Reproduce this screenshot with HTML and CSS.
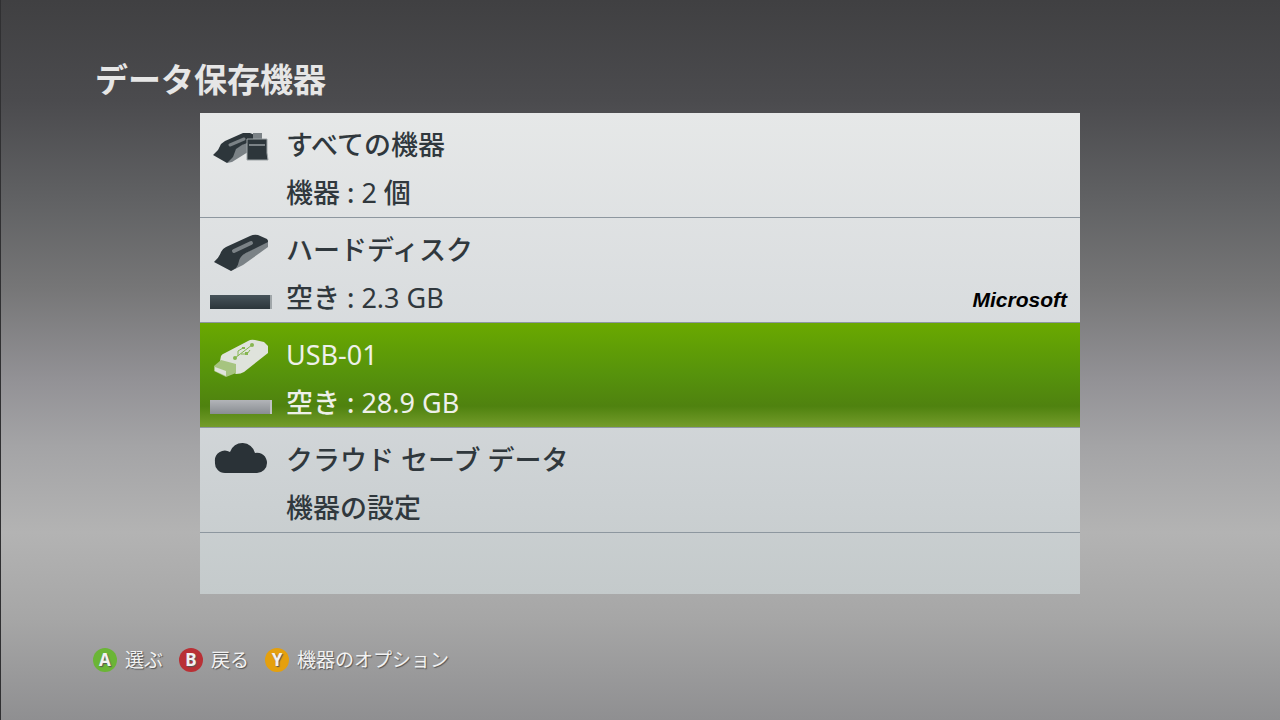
FILE: index.html
```html
<!DOCTYPE html>
<html lang="ja">
<head>
  <meta charset="UTF-8" />
  <meta name="viewport" content="width=device-width, initial-scale=1" />
  <title>データ保存機器</title>
  <link rel="stylesheet" href="styles.css">
</head>
<body>

  <h1 class="page-title">データ保存機器</h1>

  <main class="device-panel">
    <ul class="device-list">

      <li>
        <button class="device" type="button">
          <span class="device-side">
            <svg class="device-icon" viewBox="0 0 62 44" aria-hidden="true">
              <path fill="#7b8286" d="M17 35 L26 20 L46 9 V22 L38 24 L22 34z"/>
              <path fill="#2d363b" d="M3 27 L8 22 L11 16 L15 13 L33 5 H40 L47 8 V11 L32 17 L26 21 L23 29 L17 35z"/>
              <path stroke="#7b8286" stroke-width="3" stroke-linecap="round" d="M20 17 L34 11"/>
              <path fill="#7b8286" d="M43 5h9v7h-9z"/>
              <path fill="#2d363b" stroke="#9da3a6" d="M37 11h20v14l1 7H37v-7z"/>
              <path stroke="#7b8286" stroke-width="2" d="M39 17h16"/>
            </svg>
          </span>
          <span class="device-text">
            <span class="line">すべての機器</span>
            <span class="line">機器 : <span class="latin">2</span> 個</span>
          </span>
        </button>
      </li>

      <li>
        <button class="device" type="button">
          <span class="device-side">
            <svg class="device-icon" viewBox="0 0 62 44" aria-hidden="true">
              <path fill="#7b8286" d="M21 38 L29 24 L58 7 V14 L33 32z"/>
              <path fill="#2d363b" d="M4 29 Q9 25 11 19 Q12 16 16 14 L40 3 Q44 1 48 2 L57 6 Q58 7 58 9 L36 20 Q30 23 29 28 Q28 33 26 35 L21 38z"/>
              <path stroke="#7b8286" stroke-width="4" stroke-linecap="round" d="M24 18 L41 10"/>
            </svg>
            <span class="capacity"></span>
          </span>
          <span class="device-text">
            <span class="line">ハードディスク</span>
            <span class="line">空き : <span class="latin">2.3 GB</span></span>
          </span>
          <span class="brand">Microsoft</span>
        </button>
      </li>

      <li>
        <button class="device selected" type="button">
          <span class="device-side">
            <svg class="device-icon" viewBox="0 0 62 44" aria-hidden="true">
              <path fill="#dfe3dc" d="M10 23 L11 18 Q12 16 15 15 L38 3 Q41 1 45 2 L54 4 L58 8 V15 L34 34 Q31 36 26 36z"/>
              <path fill="#a6c480" d="M4 28 L11 22 L26 26 V35 L16 39 L4 33z"/>
              <path fill="#dfe3dc" d="M5 29 L16 33 V38 L5 33z"/>
              <path fill="none" stroke="#86b550" d="M25 20 L42 7 M28 18 L28 13 L33 10 M31 16 L37 16 L40 12"/>
              <circle cx="25" cy="20" r="2" fill="#86b550"/>
              <circle cx="42" cy="7" r="2" fill="#86b550"/>
              <path fill="#86b550" d="M32 9h3v2h-3z M35 14h3v3h-3z"/>
            </svg>
            <span class="capacity capacity-light"></span>
          </span>
          <span class="device-text">
            <span class="line latin">USB-01</span>
            <span class="line">空き : <span class="latin">28.9 GB</span></span>
          </span>
        </button>
      </li>

      <li>
        <button class="device" type="button">
          <span class="device-side">
            <svg class="device-icon" viewBox="0 0 62 44" aria-hidden="true">
              <path fill="#2a3237" d="M15 30 A10 10 0 0 1 5 19 A10 10 0 0 1 20 9 A13 13 0 0 1 45 10 A10 10 0 0 1 57 20 A10 10 0 0 1 47 30z"/>
            </svg>
          </span>
          <span class="device-text">
            <span class="line">クラウド セーブ データ</span>
            <span class="line">機器の設定</span>
          </span>
        </button>
      </li>

    </ul>
  </main>

  <footer class="hints">
    <button class="hint" type="button"><span class="pad pad-a">A</span>選ぶ</button>
    <button class="hint" type="button"><span class="pad pad-b">B</span>戻る</button>
    <button class="hint" type="button"><span class="pad pad-y">Y</span>機器のオプション</button>
  </footer>

</body>
</html>
```
FILE: styles.css
```css
* {
  box-sizing: border-box;
}

body {
  margin: 0;
  min-height: 100vh;
  padding: 56px 0 44px;
  display: flex;
  flex-direction: column;
  box-shadow: inset 1px 0 #303032;
  font-family: "Noto Sans", "Noto Sans CJK JP", sans-serif;
  background: linear-gradient(#404042 0%, #4b4b4e 14%, #616264 28%, #767677 40%, #939296 53%, #a4a4a6 62%, #b3b3b3 74%, #a6a6a6 86%, #8f8f91 100%);
}

button {
  margin: 0;
  border: 0;
  padding: 0;
  background: none;
  color: inherit;
  font: inherit;
  text-align: left;
  cursor: pointer;
}

.page-title {
  margin: 0 0 9px 95px;
  font-size: 33px;
  line-height: 48px;
  font-weight: 700;
  color: #e6e6e6;
}

/* Device list */
.device-panel {
  width: 100%;
  max-width: 880px;
  margin: 0 auto;
  padding-bottom: 61px;
  background: linear-gradient(#e6e8e8, #d3d7da 60%, #c4cacb);
}

.device-list {
  margin: 0;
  padding: 0;
  list-style: none;
}

.device {
  width: 100%;
  padding: 8px 10px 0;
  display: flex;
  border-bottom: 1px solid #8d979f;
  color: #30383d;
  font-size: 27px;
  line-height: 48px;
  font-weight: 500;
}

.device.selected {
  color: #eef0ea;
  background: linear-gradient(#6aa900, #56920c 50%, #4f820f 80%, #749c2b);
}

.device-side {
  width: 62px;
  margin-right: 14px;
  padding-top: 7px;
  flex: none;
}

.device-icon {
  display: block;
  width: 62px;
  height: 44px;
}

.device-text {
  flex: 1;
}

.line {
  display: block;
  height: 48px;
}

.latin {
  font-weight: 400;
}

.capacity {
  display: block;
  height: 14px;
  margin-top: 18px;
  border-right: 2px solid #a0a6a9;
  background: linear-gradient(#47535a, #2b353a);
}

.capacity-light {
  border-right-color: #c0c2c4;
  background: linear-gradient(#b2b4b8, #898d92);
}

.brand {
  align-self: flex-end;
  padding-right: 3px;
  font-family: "Liberation Sans", Arial, sans-serif;
  font-size: 21px;
  line-height: 44px;
  font-weight: 700;
  font-style: italic;
  color: #000;
}

/* Button hints */
.hints {
  margin-top: auto;
  padding-left: 93px;
  display: flex;
  gap: 16px;
}

.hint {
  display: flex;
  align-items: center;
  gap: 8px;
  font-size: 19px;
  line-height: 32px;
  color: #f2f2f2;
  text-shadow: 1px 1px 1px #555;
}

.pad {
  width: 24px;
  height: 24px;
  border-radius: 50%;
  font-size: 17px;
  line-height: 24px;
  font-weight: 700;
  text-align: center;
}

.pad-a {
  background: #6bb536;
}

.pad-b {
  background: #b93035;
}

.pad-y {
  background: #e5a00d;
}
```
